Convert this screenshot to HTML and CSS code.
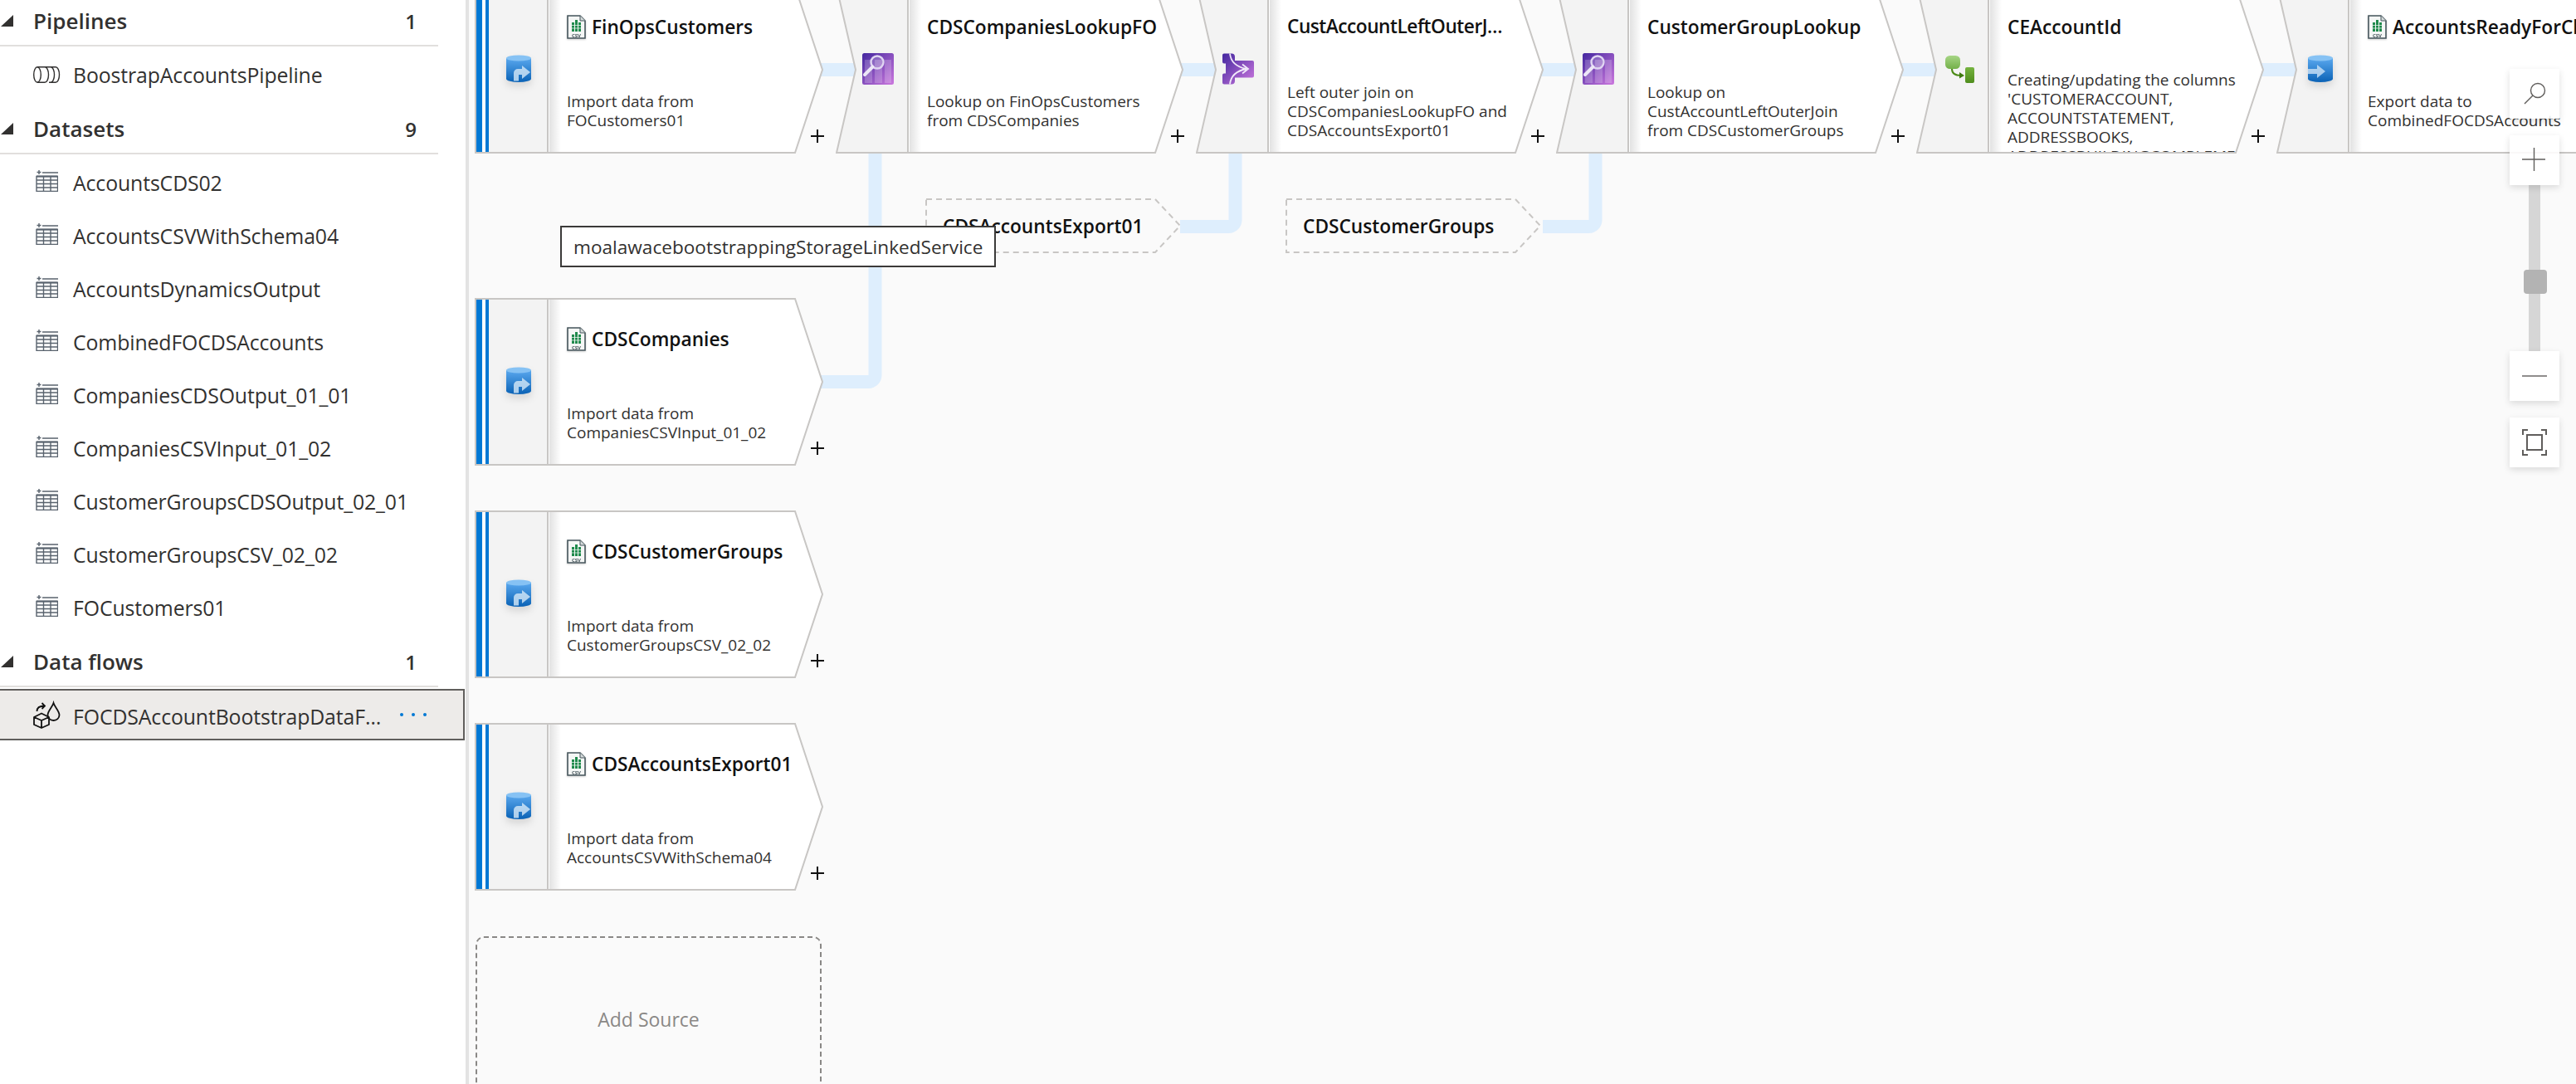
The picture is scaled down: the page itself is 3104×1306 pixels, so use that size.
FILE: index.html
```html
<!DOCTYPE html>
<html lang="en">

<head>
  <meta charset="UTF-8">
  <title>FOCDSAccountBootstrapDataFlow</title>
  <link rel="stylesheet" href="styles.css">
</head>

<body>

  <!-- shared gradients and icons -->
  <svg class="defs" aria-hidden="true">
    <defs>
      <linearGradient id="gCyl" x1="0" y1="0" x2="0" y2="1">
        <stop offset="0" stop-color="#5aa8ee" />
        <stop offset="1" stop-color="#0a62b6" />
      </linearGradient>
      <linearGradient id="gPurple" x1="0" y1="0" x2="1" y2="1">
        <stop offset="0" stop-color="#43279f" />
        <stop offset="1" stop-color="#cc78de" />
      </linearGradient>
      <linearGradient id="gGreenTop" x1="0" y1="0" x2="0" y2="1">
        <stop offset="0" stop-color="#a6d585" />
        <stop offset="1" stop-color="#74b04a" />
      </linearGradient>
      <linearGradient id="gGreen" x1="0" y1="0" x2="0" y2="1">
        <stop offset="0" stop-color="#76b340" />
        <stop offset="1" stop-color="#4f8d1c" />
      </linearGradient>
      <symbol id="iTable" viewBox="0 0 27 27">
        <path d="M1.5 3.5h5M4 1v5M8 4h19M1 8.5h25.5v18H1zM1 13h25.5M1 17.5h25.5M1 22h25.5M9.5 8.5v18M18 8.500v18" fill="none" stroke="#59636e" stroke-width="1.4" />
        <path d="M1 8.5h25.5" stroke="#59636e" stroke-width="2" />
      </symbol>
      <symbol id="iCsv" viewBox="0 0 23 29">
        <path d="M1 1h15l6 6v21H1z" fill="#f4f6f5" stroke="#46565c" stroke-width="1.6" />
        <path d="M16 1v6h6" fill="#d5dbdb" stroke="#46565c" stroke-width="1" />
        <path d="M6 9h3v11H6zM10 6h3v14h-3zM14 9h3v11h-3z" fill="#1f8a4c" />
        <path d="M6 12.5h11M6 16h11M9.5 6v14M13.5 6v14" stroke="#f4f6f5" stroke-width=".7" />
        <text class="csvText" x="11.5" y="26.5" text-anchor="middle">CSV</text>
      </symbol>
      <symbol id="iImport" viewBox="0 0 30 33">
        <path d="M0 4v25a15 4 0 0 0 30 0V4z" fill="url(#gCyl)" />
        <ellipse cx="15" cy="4" rx="15" ry="3.6" fill="#86c2f4" />
        <path d="M9 31.5V22a5 5 0 0 1 5-5h5v-4l10 8-10 8v-5h-4v7.500z" fill="#d6e8f8" fill-opacity=".8" />
      </symbol>
      <symbol id="iExport" viewBox="0 0 30 33">
        <path d="M0 4v25a15 4 0 0 0 30 0V4z" fill="url(#gCyl)" />
        <ellipse cx="15" cy="4" rx="15" ry="3.6" fill="#86c2f4" />
        <path d="M0 17h11v-5l10 8-10 8v-5H0z" fill="#d6e8f8" fill-opacity=".75" />
      </symbol>
      <symbol id="iLookup" viewBox="0 0 38 38">
        <rect width="38" height="38" rx="2.500" fill="url(#gPurple)" />
        <path d="M3 8h9v28H3zM15 8h9v28h-9zM27 8h8v28h-8z" fill="#fff" fill-opacity=".2" />
        <circle cx="18" cy="11" r="7.500" fill="#fff" fill-opacity=".2" stroke="#e0d6f2" stroke-width="2.400" />
        <path d="M12.500 16.500 3 26" stroke="#ece6f7" stroke-width="4" stroke-linecap="round" />
      </symbol>
      <symbol id="iJoin" viewBox="0 0 38 37">
        <path d="M2 0h9a4 4 0 0 1 4 4v4.500h21a2 2 0 0 1 2 2V27a2 2 0 0 1-2 2H15v4a4 4 0 0 1-4 4H2a2 2 0 0 1-2-2V26a2 2 0 0 1 2-2h2v-12H2a2 2 0 0 1-2-2V2a2 2 0 0 1 2-2z" fill="url(#gPurple)" />
        <path d="M9 0c1 10 7 16 20 18.500M9 37c1-10 7-16 20-18.500M24 13l7 5.500-7 5.500" fill="none" stroke="#f1e9fa" stroke-width="1.800" />
      </symbol>
      <symbol id="iDerive" viewBox="0 0 36 33">
        <rect x="0" y="0" width="18" height="16" rx="5.500" fill="url(#gGreenTop)" />
        <rect x="24" y="14" width="11" height="19" rx="2" fill="url(#gGreen)" />
        <path d="M8 16c0 6 4 8 11 8" fill="none" stroke="#4b8a16" stroke-width="2" />
        <path d="M17 20l6 4-6 3.500z" fill="#3f7a10" />
      </symbol>
    </defs>
  </svg>

  <div class="page">

    <aside class="sidebar">
      <div class="head"><i class="caret"></i><span>Pipelines</span><b>1</b></div>
      <div class="row">
        <svg class="rowIcon" viewBox="0 0 32 20">
          <path d="M5 .7h9a4.500 9.300 0 0 1 0 18.600H5M14 .7h13a4.500 9.300 0 0 1 0 18.600h-8M21 .7a4.500 9.300 0 0 1 0 18.600" fill="none" stroke="#323130" stroke-width="1.400" />
          <ellipse cx="5" cy="10" rx="4.300" ry="9.300" fill="none" stroke="#323130" stroke-width="1.400" />
        </svg>
        <span>BoostrapAccountsPipeline</span>
      </div>

      <div class="head"><i class="caret"></i><span>Datasets</span><b>9</b></div>
      <div class="row"><svg class="rowIcon table"><use href="#iTable" /></svg><span>AccountsCDS02</span></div>
      <div class="row"><svg class="rowIcon table"><use href="#iTable" /></svg><span>AccountsCSVWithSchema04</span></div>
      <div class="row"><svg class="rowIcon table"><use href="#iTable" /></svg><span>AccountsDynamicsOutput</span></div>
      <div class="row"><svg class="rowIcon table"><use href="#iTable" /></svg><span>CombinedFOCDSAccounts</span></div>
      <div class="row"><svg class="rowIcon table"><use href="#iTable" /></svg><span>CompaniesCDSOutput_01_01</span></div>
      <div class="row"><svg class="rowIcon table"><use href="#iTable" /></svg><span>CompaniesCSVInput_01_02</span></div>
      <div class="row"><svg class="rowIcon table"><use href="#iTable" /></svg><span>CustomerGroupsCDSOutput_02_01</span></div>
      <div class="row"><svg class="rowIcon table"><use href="#iTable" /></svg><span>CustomerGroupsCSV_02_02</span></div>
      <div class="row"><svg class="rowIcon table"><use href="#iTable" /></svg><span>FOCustomers01</span></div>

      <div class="head"><i class="caret"></i><span>Data flows</span><b>1</b></div>
      <div class="row selected">
        <svg class="rowIcon" viewBox="0 0 32 32">
          <path d="M24.500 2c-1.500 5-7 9.500-7 14.500a7 6.500 0 0 0 14 0C31.500 11.500 26 7 24.500 2zM19 22.500" fill="none" stroke="#111" stroke-width="1.800" />
          <path d="M10 14.500 19 19v9l-9 4-9-4v-9zM1 19l9 4 9-4M10 23v9" fill="#edebe9" stroke="#111" stroke-width="1.800" stroke-linejoin="round" />
          <path d="M4.500 12c0-4 3-6.500 9-6.500M10.500 2l3.500 3.500-3.500 3.500" fill="none" stroke="#111" stroke-width="1.800" />
        </svg>
        <span class="ellipsis">FOCDSAccountBootstrapDataFlow</span>
        <em class="dots"><i></i><i></i><i></i></em>
      </div>
    </aside>

    <main class="canvas">

      <svg class="links">
        <path d="M420 84H2240M489.500 170V452a8 8 0 0 1-8 8H420M923.500 170V265a8 8 0 0 1-8 8H857M1357.500 170V265a8 8 0 0 1-8 8H1294" />
      </svg>

      <div class="node source n1">
        <svg class="shape">
          <polygon class="body" points="1,1 386,1 419,101 386,201 1,201" />
          <rect class="band" x="17" y="1" width="70" height="200" />
          <rect class="blue" x="1" y="1" width="8" height="200" />
          <rect class="blue" x="13" y="1" width="4" height="200" />
          <path class="edge" d="M88 1V201M1 1H386L419 101 386 201H1z" />
        </svg>
        <svg class="stepIcon cyl"><use href="#iImport" /></svg>
        <div class="info">
          <h3><svg class="csv"><use href="#iCsv" /></svg>FinOpsCustomers</h3>
          <div class="desc"><p>Import data from<br>FOCustomers01</p></div>
        </div>
        <i class="plus"></i>
      </div>

      <div class="node n2">
        <svg class="shape">
          <polygon class="body" points="1,1 385,1 418,101 385,201 1,201 24,101" />
          <polygon class="band" points="1,1 87,1 87,201 1,201 24,101" />
          <path class="edge" d="M87 1V201M1 1H385L418 101 385 201H1L24 101z" />
        </svg>
        <svg class="stepIcon square"><use href="#iLookup" /></svg>
        <div class="info">
          <h3>CDSCompaniesLookupFO</h3>
          <div class="desc"><p>Lookup on FinOpsCustomers<br>from CDSCompanies</p></div>
        </div>
        <i class="plus"></i>
      </div>

      <div class="node n3">
        <svg class="shape">
          <polygon class="body" points="1,1 385,1 418,101 385,201 1,201 24,101" />
          <polygon class="band" points="1,1 87,1 87,201 1,201 24,101" />
          <path class="edge" d="M87 1V201M1 1H385L418 101 385 201H1L24 101z" />
        </svg>
        <svg class="stepIcon square"><use href="#iJoin" /></svg>
        <div class="info">
          <h3 class="ellipsis">CustAccountLeftOuterJoin</h3>
          <div class="desc"><p>Left outer join on<br>CDSCompaniesLookupFO and<br>CDSAccountsExport01</p></div>
        </div>
        <i class="plus"></i>
      </div>

      <div class="node n4">
        <svg class="shape">
          <polygon class="body" points="1,1 385,1 418,101 385,201 1,201 24,101" />
          <polygon class="band" points="1,1 87,1 87,201 1,201 24,101" />
          <path class="edge" d="M87 1V201M1 1H385L418 101 385 201H1L24 101z" />
        </svg>
        <svg class="stepIcon square"><use href="#iLookup" /></svg>
        <div class="info">
          <h3>CustomerGroupLookup</h3>
          <div class="desc"><p>Lookup on<br>CustAccountLeftOuterJoin<br>from CDSCustomerGroups</p></div>
        </div>
        <i class="plus"></i>
      </div>

      <div class="node n5">
        <svg class="shape">
          <polygon class="body" points="1,1 385,1 418,101 385,201 1,201 24,101" />
          <polygon class="band" points="1,1 87,1 87,201 1,201 24,101" />
        </svg>
        <svg class="stepIcon derive"><use href="#iDerive" /></svg>
        <div class="info">
          <h3>CEAccountId</h3>
          <div class="desc"><p>Creating/updating the columns<br>'CUSTOMERACCOUNT,<br>ACCOUNTSTATEMENT,<br>ADDRESSBOOKS,<br>ADDRESSBUILDINGCOMPLEME</p></div>
        </div>
        <svg class="shape over">
          <path class="edge" d="M87 1V201M1 1H385L418 101 385 201H1L24 101z" />
        </svg>
        <i class="plus"></i>
      </div>

      <div class="node n6">
        <svg class="shape wide">
          <polygon class="body" points="1,1 500,1 500,201 1,201 24,101" />
          <polygon class="band" points="1,1 87,1 87,201 1,201 24,101" />
          <path class="edge" d="M87 1V201M500 1H1L24 101 1 201H500" />
        </svg>
        <svg class="stepIcon cyl"><use href="#iExport" /></svg>
        <div class="info">
          <h3><svg class="csv"><use href="#iCsv" /></svg>AccountsReadyForCl</h3>
          <div class="desc"><p>Export data to<br>CombinedFOCDSAccounts</p></div>
        </div>
      </div>

      <div class="ghost g1">
        <svg class="ghostShape"><polygon points="1,1 277,1 307,33 277,65 1,65" /></svg>
        <span>CDSAccountsExport01</span>
      </div>
      <div class="ghost g2">
        <svg class="ghostShape"><polygon points="1,1 277,1 307,33 277,65 1,65" /></svg>
        <span>CDSCustomerGroups</span>
      </div>

      <div class="node source s2">
        <svg class="shape">
          <polygon class="body" points="1,1 386,1 419,101 386,201 1,201" />
          <rect class="band" x="17" y="1" width="70" height="200" />
          <rect class="blue" x="1" y="1" width="8" height="200" />
          <rect class="blue" x="13" y="1" width="4" height="200" />
          <path class="edge" d="M88 1V201M1 1H386L419 101 386 201H1z" />
        </svg>
        <svg class="stepIcon cyl"><use href="#iImport" /></svg>
        <div class="info">
          <h3><svg class="csv"><use href="#iCsv" /></svg>CDSCompanies</h3>
          <div class="desc"><p>Import data from<br>CompaniesCSVInput_01_02</p></div>
        </div>
        <i class="plus"></i>
      </div>

      <div class="node source s3">
        <svg class="shape">
          <polygon class="body" points="1,1 386,1 419,101 386,201 1,201" />
          <rect class="band" x="17" y="1" width="70" height="200" />
          <rect class="blue" x="1" y="1" width="8" height="200" />
          <rect class="blue" x="13" y="1" width="4" height="200" />
          <path class="edge" d="M88 1V201M1 1H386L419 101 386 201H1z" />
        </svg>
        <svg class="stepIcon cyl"><use href="#iImport" /></svg>
        <div class="info">
          <h3><svg class="csv"><use href="#iCsv" /></svg>CDSCustomerGroups</h3>
          <div class="desc"><p>Import data from<br>CustomerGroupsCSV_02_02</p></div>
        </div>
        <i class="plus"></i>
      </div>

      <div class="node source s4">
        <svg class="shape">
          <polygon class="body" points="1,1 386,1 419,101 386,201 1,201" />
          <rect class="band" x="17" y="1" width="70" height="200" />
          <rect class="blue" x="1" y="1" width="8" height="200" />
          <rect class="blue" x="13" y="1" width="4" height="200" />
          <path class="edge" d="M88 1V201M1 1H386L419 101 386 201H1z" />
        </svg>
        <svg class="stepIcon cyl"><use href="#iImport" /></svg>
        <div class="info">
          <h3><svg class="csv"><use href="#iCsv" /></svg>CDSAccountsExport01</h3>
          <div class="desc"><p>Import data from<br>AccountsCSVWithSchema04</p></div>
        </div>
        <i class="plus"></i>
      </div>

      <div class="addSource">Add Source</div>

      <div class="tooltip">moalawacebootstrappingStorageLinkedService</div>

      <div class="zoomBar">
        <button class="zoomBtn">
          <svg viewBox="0 0 60 60"><circle cx="34" cy="26" r="8.500" /><path d="M28 32 18 42" /></svg>
        </button>
        <div class="zoomSlider">
          <button class="zoomBtn">
            <svg viewBox="0 0 60 60"><path d="M15 29h28M29.500 15v28" /></svg>
          </button>
          <div class="track"><i class="thumb"></i></div>
          <button class="zoomBtn">
            <svg viewBox="0 0 60 60"><path d="M15 30h30" /></svg>
          </button>
        </div>
        <button class="zoomBtn">
          <svg class="thick" viewBox="0 0 60 60"><path d="M16 21v-6h6M38 15h6v6M44 39v6h-6M22 45h-6v-6M21 21h18v18H21z" /></svg>
        </button>
      </div>

    </main>
  </div>

</body>

</html>
```

FILE: styles.css
```css
* {
  box-sizing: border-box;
}

html,
body {
  margin: 0;
  height: 100%;
  overflow: hidden;
}

body {
  font-family: "Open Sans", "Noto Sans", sans-serif;
  color: #323130;
  background: #fff;
}

.defs {
  position: absolute;
  width: 0;
  height: 0;
}

.page {
  display: flex;
  height: 1306px;
  overflow: hidden;
}

/* 左侧资源列表 */
.sidebar {
  flex: 0 0 565px;
  border-right: 4px solid #e3e3e3;
  margin-top: -8px;
  font-size: 24.8px;
}

.head {
  display: flex;
  align-items: center;
  width: 528px;
  height: 64px;
  padding: 4px 26px 0 1px;
  margin-bottom: 2px;
  border-bottom: 2px solid #e1dfdd;
  font-size: 26px;
  font-weight: 600;
}

.head b {
  margin-left: auto;
  font-size: 24px;
  font-weight: 600;
}

.caret {
  width: 15px;
  height: 14px;
  margin-right: 24px;
  background: #323130;
  clip-path: polygon(100% 0, 100% 100%, 0 100%);
}

.row {
  display: flex;
  align-items: center;
  height: 64px;
  padding-left: 40px;
  letter-spacing: -0.1px;
  white-space: nowrap;
}

.rowIcon {
  flex: none;
  width: 32px;
  height: 32px;
  margin-right: 16px;
  overflow: visible;
}

.rowIcon.table {
  width: 27px;
  height: 27px;
  margin: -6px 18px 0 3px;
}

.row.selected {
  width: 560px;
  height: 62px;
  background: #edebe9;
  border: solid #605e5c;
  border-width: 2px 2px 2px 0;
}

.ellipsis {
  overflow: hidden;
  text-overflow: ellipsis;
  white-space: nowrap;
}

.row.selected .ellipsis {
  width: 373px;
  padding-top: 4px;
}

.dots {
  display: flex;
  gap: 10px;
  margin-left: 21px;
}

.dots i {
  width: 4px;
  height: 4px;
  border-radius: 50%;
  background: #0078d4;
}

/* 画布, 节点按坐标摆放 */
.canvas {
  position: relative;
  flex: 1;
  overflow: hidden;
  background: #fafafa;
}

.links {
  position: absolute;
  left: 0;
  top: 0;
  width: 100%;
  height: 100%;
}

.links path {
  fill: none;
  stroke: #deeefd;
  stroke-width: 16;
}

.node {
  position: absolute;
  width: 420px;
  height: 202px;
}

.n1 {
  left: 7px;
  top: -17px;
}

.n2 {
  left: 442px;
  top: -17px;
}

.n3 {
  left: 876px;
  top: -17px;
}

.n4 {
  left: 1310px;
  top: -17px;
}

.n5 {
  left: 1744px;
  top: -17px;
}

.n6 {
  left: 2178px;
  top: -17px;
}

.s2 {
  left: 7px;
  top: 359px;
}

.s3 {
  left: 7px;
  top: 615px;
}

.s4 {
  left: 7px;
  top: 871px;
}

.shape {
  position: absolute;
  left: 0;
  top: 0;
  width: 420px;
  height: 202px;
}

.shape.wide {
  width: 500px;
}

.shape.over {
  pointer-events: none;
}

.body {
  fill: #fff;
}

.band {
  fill: #f3f3f3;
}

.blue {
  fill: #0078d4;
}

.edge {
  fill: none;
  stroke: #c8c6c4;
  stroke-width: 2;
}

.stepIcon {
  position: absolute;
  overflow: visible;
}

.stepIcon.cyl {
  left: 38px;
  top: 83px;
  width: 30px;
  height: 33px;
  filter: drop-shadow(0 5px 5px rgba(0, 0, 0, 0.12));
}

.stepIcon.square {
  left: 32px;
  top: 81px;
  width: 38px;
  height: 38px;
}

.stepIcon.derive {
  left: 35px;
  top: 84px;
  width: 36px;
  height: 33px;
}

.info {
  position: absolute;
  left: 89px;
  top: 2px;
  width: 296px;
  height: 198px;
  padding: 30px 0 0 21px;
  background: linear-gradient(90deg, #e2e2e2, #fff 14px) no-repeat left / 14px 100%;
}

.n6 .info {
  width: 400px;
}

.source .info {
  left: 90px;
}

h3 {
  display: flex;
  align-items: center;
  height: 34px;
  margin: 0;
  font-size: 22.7px;
  font-weight: 600;
  color: #111;
  white-space: nowrap;
}

h3.ellipsis {
  display: block;
  width: 268px;
  letter-spacing: -0.5px;
  line-height: 34px;
}

.csv {
  flex: none;
  width: 23px;
  height: 29px;
  margin-right: 7px;
  filter: drop-shadow(0 1px 1px rgba(0, 0, 0, 0.2));
}

.csvText {
  font-size: 6px;
  font-weight: 700;
  fill: #46565c;
}

.desc {
  display: flex;
  height: 98px;
  margin-top: 36px;
  overflow: hidden;
  font-size: 19px;
  line-height: 23px;
  white-space: nowrap;
}

.desc p {
  margin: auto 0;
}

.plus {
  position: absolute;
  left: 404px;
  top: 173px;
  width: 16px;
  height: 16px;
  background:
    linear-gradient(#111, #111) center / 100% 2px no-repeat,
    linear-gradient(#111, #111) center / 2px 100% no-repeat;
}

.source .plus {
  left: 405px;
}

.ghost {
  position: absolute;
  top: 239px;
  display: flex;
  align-items: center;
  width: 310px;
  height: 67px;
  padding-left: 21px;
  font-size: 22.7px;
  font-weight: 600;
  color: #111;
}

.g1 {
  left: 550px;
}

.g2 {
  left: 984px;
}

.ghostShape {
  position: absolute;
  left: 0;
  top: 0;
  width: 310px;
  height: 67px;
}

.ghostShape polygon {
  fill: none;
  stroke: #c8c6c4;
  stroke-width: 2;
  stroke-dasharray: 7 5;
}

.addSource {
  position: absolute;
  left: 8px;
  top: 1128px;
  display: flex;
  align-items: center;
  justify-content: center;
  width: 417px;
  height: 200px;
  border: 2px dashed #8a8886;
  border-radius: 10px;
  font-size: 23px;
  color: #8a8886;
}

.tooltip {
  position: absolute;
  left: 110px;
  top: 272px;
  height: 50px;
  padding: 0 14px;
  background: #fff;
  border: 2px solid #3b3a39;
  font-size: 22.6px;
  line-height: 48px;
  white-space: nowrap;
}

/* 右侧缩放控件 */
.zoomBar {
  position: absolute;
  right: 20px;
  top: 83px;
  display: flex;
  flex-direction: column;
  gap: 20px;
  width: 60px;
}

.zoomSlider {
  display: flex;
  flex-direction: column;
}

.zoomBtn {
  position: relative;
  z-index: 1;
  display: block;
  width: 60px;
  height: 60px;
  padding: 0;
  border: none;
  background: rgba(255, 255, 255, 0.88);
  box-shadow: 0 3px 8px rgba(0, 0, 0, 0.13);
}

.zoomBtn svg {
  display: block;
  width: 60px;
  height: 60px;
  fill: none;
  stroke: #605e5c;
  stroke-width: 1.4;
}

.zoomBtn svg.thick {
  stroke-width: 2;
}

.track {
  position: relative;
  width: 14px;
  height: 200px;
  margin-left: 23px;
  background: #d6d6d6;
}

.thumb {
  position: absolute;
  left: -6px;
  top: 102px;
  width: 28px;
  height: 29px;
  border-radius: 4px;
  background: #b3b3b3;
}
```
